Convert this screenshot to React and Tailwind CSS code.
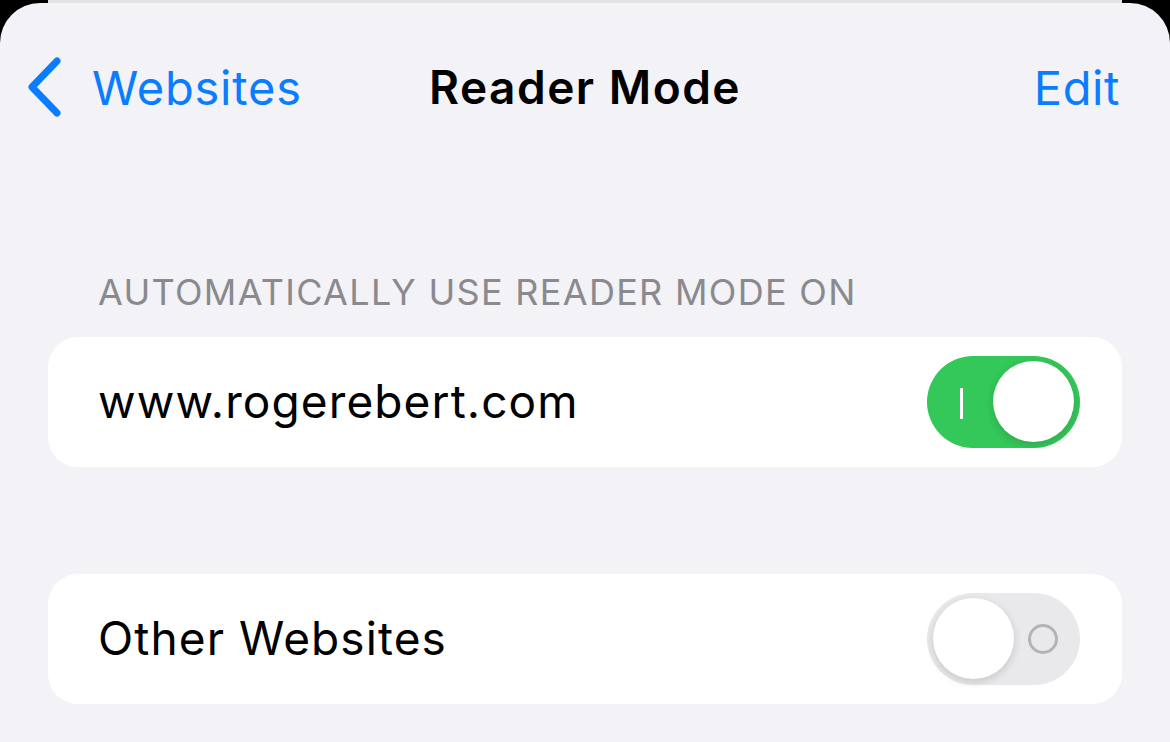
import React from 'react'

function Chevron() {
  return (
    <svg width="40" height="62" viewBox="0 0 40 62" fill="none" className="shrink-0">
      <path d="M31 4 L6 30 L31 56" stroke="#0a7cff" strokeWidth="7" strokeLinecap="round" strokeLinejoin="round" />
    </svg>
  )
}

function Toggle({ on }) {
  if (on) {
    return (
      <div className="relative w-[153px] h-[92px] rounded-full bg-[#34c759] flex items-center justify-end pr-[6px]">
        <div className="absolute left-[33px] top-[32px] w-[3px] h-[31px] bg-white" />
        <div className="w-[81px] h-[81px] rounded-full bg-white shadow-[0_3px_8px_rgba(0,0,0,0.15)]" />
      </div>
    )
  }
  return (
    <div className="relative w-[153px] h-[92px] rounded-full bg-[#e9e9eb] flex items-center pl-[6px]">
      <div className="w-[81px] h-[81px] rounded-full bg-white shadow-[0_3px_8px_rgba(0,0,0,0.15)]" />
      <div className="absolute left-[101px] top-[31px] w-[30px] h-[30px] rounded-full border-[3px] border-[#b3b3b3]" />
    </div>
  )
}

function Row({ label, on }) {
  return (
    <div className="mx-[48px] h-[130px] rounded-[30px] bg-white flex items-center justify-between pl-[50px] pr-[42px]">
      <span className="text-[46px] text-black tracking-[1.1px]">{label}</span>
      <Toggle on={on} />
    </div>
  )
}

export default function App() {
  return (
    <div className="w-[1170px] h-[742px] bg-black flex flex-col overflow-hidden" style={{ fontFamily: 'Inter, "Noto Sans", sans-serif' }}>
      <div className="mx-[48px] h-[3px] bg-[#e2e2e4] shrink-0" />
      <div className="flex-1 rounded-t-[40px] bg-[#f2f2f7] flex flex-col">
        <div className="relative flex items-center justify-between pt-[50px] pl-[26px] pr-[50px]">
          <div className="flex items-center gap-[26px] text-[#0a7cff]">
            <Chevron />
            <span className="text-[47px] tracking-[0.8px]">Websites</span>
          </div>
          <span className="absolute left-0 right-0 top-[50px] text-center text-[46px] font-semibold tracking-[1.5px] text-black pointer-events-none">Reader Mode</span>
          <span className="text-[47px] text-[#0a7cff] tracking-[0.6px]">Edit</span>
        </div>
        <div className="mt-[150px] pl-[98px] text-[36px] text-[#8a8a8e] tracking-[1.3px] leading-none">AUTOMATICALLY USE READER MODE ON</div>
        <div className="mt-[27px]">
          <Row label="www.rogerebert.com" on />
        </div>
        <div className="mt-[107px]">
          <Row label="Other Websites" on={false} />
        </div>
      </div>
    </div>
  )
}
